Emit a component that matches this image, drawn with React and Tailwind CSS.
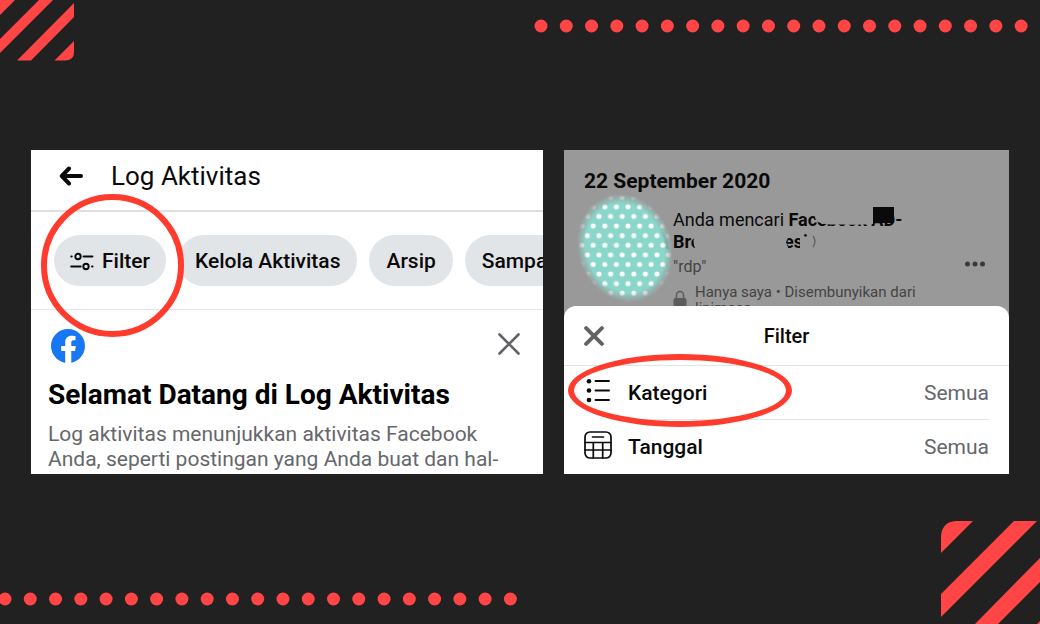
import React from 'react';

const chips = ['Kelola Aktivitas', 'Arsip', 'Sampah'];

const DotRow = ({ count, className }) => (
  <svg className={className} width={count * 25.27 - 11} height="14" aria-hidden="true">
    {Array.from({ length: count }, (_, i) => (
      <circle key={i} cx={7 + i * 25.27} cy="7" r="6.5" fill="#ff4545" />
    ))}
  </svg>
);

const FilterIcon = () => (
  <svg width="24" height="20" viewBox="0 0 24 20" fill="none" stroke="#0a0a0a" strokeWidth="1.900" strokeLinecap="round">
    <path d="M1.200 4.500h0.600M13.500 4.500h9M1.200 14.500h9.500M22 14.500h0.600" />
    <circle cx="8" cy="4.500" r="2.700" />
    <circle cx="16" cy="14.500" r="2.700" />
  </svg>
);

const FacebookIcon = () => (
  <svg width="34" height="34" viewBox="0 0 34 34">
    <circle cx="17" cy="17" r="17" fill="#1877f2" />
    <path
      d="M14.200 34V22H10.200V17H14.200V13.500C14.200 9 16.600 6.700 20.800 6.700C22.500 6.700 24.500 7 24.500 7V11.300H22.300C20.700 11.300 20.300 12.300 20.300 13.600V17H24.800L24.100 22H20.300V34Z"
      fill="#fff"
    />
  </svg>
);

const CloseIcon = ({ size, width }) => (
  <svg width={size} height={size} viewBox="0 0 24 24" fill="none" stroke="#606265" strokeWidth={width} strokeLinecap="round">
    <path d="M2.500 2.500l19 19M21.500 2.500l-19 19" />
  </svg>
);

const ListIcon = () => (
  <svg width="28" height="28" viewBox="0 0 28 28" stroke="#0a0a0a" strokeWidth="1.900" strokeLinecap="round">
    <path d="M11.500 2h13.500M11.500 11.500h13.500M11.500 21h13.500" />
    <g fill="#0a0a0a" stroke="none">
      <circle cx="5" cy="2.300" r="2.300" />
      <circle cx="5" cy="11.500" r="2.300" />
      <circle cx="5" cy="21" r="2.300" />
    </g>
  </svg>
);

const CalendarIcon = () => (
  <svg className="mb-1" width="28" height="28" viewBox="0 0 28 28" fill="none" stroke="#0a0a0a" strokeWidth="1.700" strokeLinecap="round">
    <rect x="1" y="1" width="26" height="26" rx="5" />
    <path d="M8.500 6h11M1 11.500h26M1 19h26M9.300 11.500V27M18.700 11.500V27" />
  </svg>
);

const Avatar = () => (
  <svg width="100" height="112" viewBox="0 0 100 112" aria-hidden="true">
    <defs>
      <pattern id="dots" width="11.600" height="19.200" patternUnits="userSpaceOnUse" x="4.700" y="9">
        <circle cx="2.900" cy="4.800" r="2.500" fill="#fff" />
        <circle cx="8.700" cy="14.400" r="2.500" fill="#fff" />
      </pattern>
      <radialGradient id="edge">
        <stop offset="0.820" stopColor="#fff" />
        <stop offset="1" stopColor="#fff" stopOpacity="0" />
      </radialGradient>
      <mask id="fade">
        <ellipse cx="51" cy="55" rx="47" ry="55" fill="url(#edge)" transform="rotate(-20 51 55)" />
      </mask>
    </defs>
    <path d="M82 36q10 7 11 20" fill="none" stroke="#6b6b6b" strokeWidth="4" />
    <g mask="url(#fade)">
      <rect width="100" height="112" fill="#8bd6ca" />
      <rect width="100" height="112" fill="url(#dots)" />
    </g>
  </svg>
);

const LogPanel = () => (
  <section className="relative bg-white">
    <div className="overflow-hidden">
      <header className="flex h-[62px] items-center gap-7 border-b-2 border-[#dedfe1] px-7 pb-2">
        <button type="button" aria-label="Kembali">
          <svg width="24" height="20" viewBox="0 0 24 20" fill="none" stroke="#0a0a0a" strokeWidth="4" strokeLinecap="round" strokeLinejoin="round">
            <path d="M22 10H4M10 2.500L2.800 10l7.200 7.500" />
          </svg>
        </button>
        <h1 className="text-[26px] leading-8 text-[#0a0a0a]">Log Aktivitas</h1>
      </header>
      <div className="flex gap-3 border-b border-[#e4e5e7] pt-[23px] pb-[23px] pl-[23px]">
        <button type="button" className="flex h-[51px] shrink-0 items-center gap-2 rounded-full bg-[#e2e5e8] px-4 pt-[2px] text-[21px] font-medium text-[#0a0a0a]">
          <FilterIcon />
          Filter
        </button>
        {chips.map((chip) => (
          <button key={chip} type="button" className="h-[51px] shrink-0 rounded-full bg-[#e2e5e8] px-[17px] pt-[2px] text-[21px] font-medium text-[#0a0a0a]">
            {chip}
          </button>
        ))}
      </div>
      <div className="px-[17px] pt-[19px]">
        <div className="flex items-start justify-between pr-[2px] pl-[3px]">
          <FacebookIcon />
          <button type="button" aria-label="Tutup" className="p-[3px]">
            <CloseIcon size={24} width={2.6} />
          </button>
        </div>
        <h2 className="mt-4 text-[28px] leading-8 font-bold text-black">Selamat Datang di Log Aktivitas</h2>
        <p className="mt-[11px] text-[21px] leading-[25px] text-[#65676b]">
          Log aktivitas menunjukkan aktivitas Facebook
          <br />
          Anda, seperti postingan yang Anda buat dan hal-
        </p>
      </div>
    </div>
    <div className="pointer-events-none absolute top-[44px] left-[10px] size-[143px] rounded-full border-[6px] border-[#ff3b2d]" />
  </section>
);

const FilterPanel = () => (
  <section className="relative flex flex-col bg-[#999]">
    <div className="relative h-[156px] overflow-hidden px-5 pt-[17px]">
      <h2 className="text-[21px] leading-7 font-bold text-[#0a0a0a]">22 September 2020</h2>
      <div className="flex pl-[89px]">
        <div className="grow pt-[14px]">
          <p className="text-[18px] leading-[22px] text-[#0a0a0a]">
            Anda mencari <b className="font-bold">Facebook AD-</b>
            <br />
            <b className="font-bold">Bro</b>
            <b className="ml-[83px] font-bold">esi</b>
          </p>
          <p className="mt-1 text-[16px] leading-5 text-[#444]">"rdp"</p>
          <div className="mt-[7px] flex gap-2 text-[15px] leading-4 text-[#444]">
            <svg className="mt-[6px]" width="14" height="18" viewBox="0 0 14 18">
              <path d="M3.500 8V5a3.500 3.500 0 0 1 7 0v3" fill="none" stroke="#5c5c5c" strokeWidth="1.500" />
              <rect x="0.500" y="8" width="13" height="10" rx="2" fill="#5c5c5c" />
            </svg>
            <p>
              Hanya saya • Disembunyikan dari
              <br />
              linimasa
            </p>
          </div>
        </div>
        <button type="button" aria-label="Opsi lainnya" className="mt-[59px] mr-1 h-5">
          <svg width="20" height="6" fill="#3a3a3a">
            <circle cx="2.500" cy="3" r="2.500" />
            <circle cx="10" cy="3" r="2.500" />
            <circle cx="17.500" cy="3" r="2.500" />
          </svg>
        </button>
      </div>
      <svg className="absolute top-[50px] left-[105px]" width="250" height="56" aria-hidden="true">
        <path d="M149 8H204V24Q190 25 172 24.500Q155 25 149 22L146 18Z" fill="#999" />
        <path d="M27 30H115L119 38L117 42L120 50H27Q22 42 27 30ZM131 38L140 37V50H131Z" fill="#999" />
        <rect x="204" y="7" width="21" height="16" fill="#0a0a0a" />
        <path d="M144 36q4 5 0 11" fill="none" stroke="#666" strokeWidth="1.500" />
      </svg>
      <div className="absolute top-[43px] left-[10px]">
        <Avatar />
      </div>
    </div>
    <div className="grow rounded-t-xl bg-white">
      <header className="relative flex h-[60px] items-center justify-center border-b border-[#e2e3e5]">
        <button type="button" aria-label="Tutup" className="absolute left-5">
          <CloseIcon size={20} width={4.6} />
        </button>
        <h2 className="text-[20px] leading-6 font-medium text-[#0a0a0a]">Filter</h2>
      </header>
      <button type="button" className="flex w-full items-center gap-4 px-5 text-left">
        <ListIcon />
        <span className="flex h-[54px] grow items-center justify-between border-b border-[#e2e3e5] pt-[2px]">
          <span className="text-[21px] font-medium text-[#0a0a0a]">Kategori</span>
          <span className="text-[21px] text-[#65676b]">Semua</span>
        </span>
      </button>
      <button type="button" className="flex w-full items-center gap-4 px-5 text-left">
        <CalendarIcon />
        <span className="flex h-[54px] grow items-center justify-between pt-[2px]">
          <span className="text-[21px] font-medium text-[#0a0a0a]">Tanggal</span>
          <span className="text-[21px] text-[#65676b]">Semua</span>
        </span>
      </button>
    </div>
    <div className="pointer-events-none absolute top-[204px] left-1 h-[73px] w-[224px] rounded-[50%] border-[6px] border-[#ff3b2d]" />
  </section>
);

const App = () => {
  return (
    <div className="flex min-h-screen flex-col justify-between overflow-hidden bg-[#212121] font-['Roboto',sans-serif]">
      <div className="flex items-start justify-between">
        <svg width="74" height="61" viewBox="0 0 74 61" fill="#ff4545" aria-hidden="true">
          <path d="M0 0H15L0 15ZM39 0H53L0 53V39ZM74 3V17L31 60.500H17ZM74 41V52Q74 60.500 65 60.500H54.500Z" />
        </svg>
        <DotRow count={20} className="mt-[19px] mr-3" />
      </div>
      <main className="grid grid-cols-[512fr_445fr] gap-[21px] px-[31px] pt-[89px] pb-[47px]">
        <LogPanel />
        <FilterPanel />
      </main>
      <div className="flex items-end justify-between">
        <DotRow count={21} className="mb-[18px] -ml-[2px]" />
        <svg width="99" height="103" viewBox="0 0 99 103" fill="#ff4545" aria-hidden="true">
          <path d="M0 32V15Q1 1 15 0H32ZM73 0H96L0 96V73ZM99 37V61L57 103H34ZM99 100V103H96Z" />
        </svg>
      </div>
    </div>
  );
};

export default App;
